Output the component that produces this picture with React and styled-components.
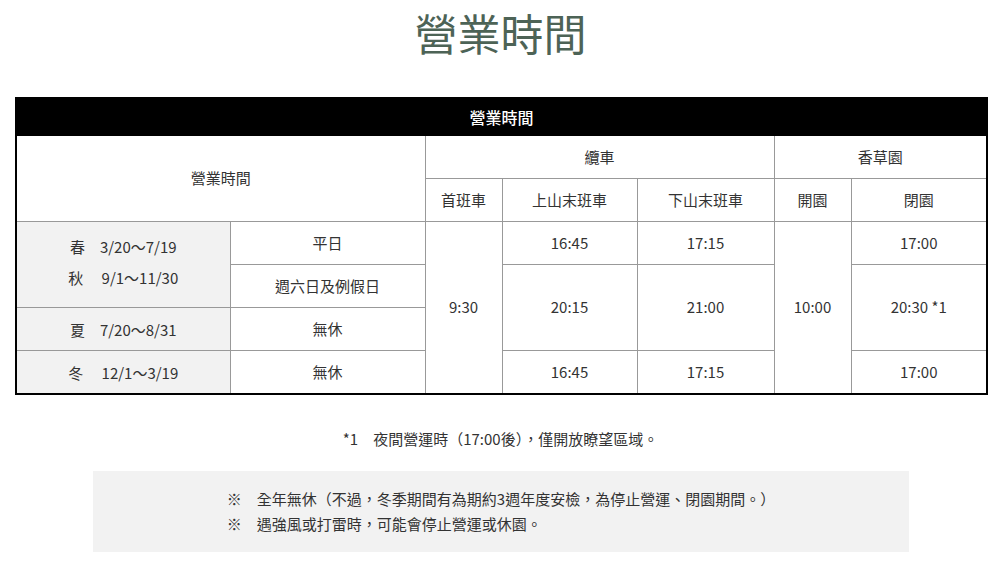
import React from "react";
import styled, { createGlobalStyle } from "styled-components";

const GlobalStyle = createGlobalStyle`
  body {
    margin: 0;
    background: #fff;
    font-family: "Noto Sans CJK TC", "Noto Sans", sans-serif;
    color: #333;
  }
`;

const Page = styled.div`
  width: 1000px;
  padding: 2px 14px 0 15px;
  box-sizing: border-box;
`;

const Title = styled.h1`
  margin: 0;
  font-size: 43px;
  line-height: 60px;
  font-weight: 400;
  text-align: center;
  color: #4d6356;
`;

const Table = styled.table`
  margin-top: 35px;
  width: 971px;
  border-collapse: collapse;
  border: 2px solid #000;
  table-layout: fixed;
  font-size: 15px;
`;

const Caption = styled.th`
  background: #000;
  color: #fff;
  font-size: 16px;
  font-weight: 500;
  height: 35px;
  padding: 0;
  border: 2px solid #000;
`;

const Cell = styled.td`
  border: 1px solid #999;
  height: ${(p) => (p.$tall ? 85 : 42)}px;
  padding: 0 0 ${(p) => (p.$lift ? 6 : 0)}px;
  text-align: center;
  vertical-align: middle;
  font-weight: 400;
  color: #333;
  line-height: 1.5;
  background: ${(p) => (p.$shade ? "#f2f2f2" : "#fff")};
`;

const HeadCell = styled(Cell).attrs({ as: "th" })``;

const Season = styled.div`
  white-space: pre;
  line-height: 31px;
`;

const Note = styled.p`
  margin: 32px 0 0;
  font-size: 15px;
  line-height: 24px;
  text-align: center;
  white-space: pre;
`;

const NoticeBox = styled.div`
  width: 816px;
  margin: 20px 0 0 78px;
  padding: 15px 0 16px;
  background: #f2f2f2;
  text-align: center;
`;

const NoticeList = styled.ul`
  display: inline-block;
  margin: 0;
  padding: 0;
  list-style: none;
  text-align: left;
  font-size: 15px;
  line-height: 25px;
`;

const NoticeItem = styled.li`
  white-space: pre;
`;

export default function App() {
  return (
    <Page>
      <GlobalStyle />
      <Title>營業時間</Title>
      <Table>
        <colgroup>
          <col style={{ width: 214 }} />
          <col style={{ width: 195 }} />
          <col style={{ width: 77 }} />
          <col style={{ width: 135 }} />
          <col style={{ width: 137 }} />
          <col style={{ width: 77 }} />
          <col style={{ width: 136 }} />
        </colgroup>
        <thead>
          <tr>
            <Caption colSpan={7}>營業時間</Caption>
          </tr>
          <tr>
            <HeadCell colSpan={2} rowSpan={2}>營業時間</HeadCell>
            <HeadCell colSpan={3}>纜車</HeadCell>
            <HeadCell colSpan={2}>香草園</HeadCell>
          </tr>
          <tr>
            <HeadCell>首班車</HeadCell>
            <HeadCell>上山末班車</HeadCell>
            <HeadCell>下山末班車</HeadCell>
            <HeadCell>開園</HeadCell>
            <HeadCell>閉園</HeadCell>
          </tr>
        </thead>
        <tbody>
          <tr>
            <Cell $shade $lift rowSpan={2}>
              <Season>{"春　3/20～7/19"}</Season>
              <Season>{"秋　 9/1～11/30"}</Season>
            </Cell>
            <Cell>平日</Cell>
            <Cell rowSpan={4}>9:30</Cell>
            <Cell>16:45</Cell>
            <Cell>17:15</Cell>
            <Cell rowSpan={4}>10:00</Cell>
            <Cell>17:00</Cell>
          </tr>
          <tr>
            <Cell>週六日及例假日</Cell>
            <Cell rowSpan={2}>20:15</Cell>
            <Cell rowSpan={2}>21:00</Cell>
            <Cell rowSpan={2}>20:30 *1</Cell>
          </tr>
          <tr>
            <Cell $shade>
              <Season>{"夏　7/20～8/31"}</Season>
            </Cell>
            <Cell>無休</Cell>
          </tr>
          <tr>
            <Cell $shade>
              <Season>{"冬　 12/1～3/19"}</Season>
            </Cell>
            <Cell>無休</Cell>
            <Cell>16:45</Cell>
            <Cell>17:15</Cell>
            <Cell>17:00</Cell>
          </tr>
        </tbody>
      </Table>
      <Note>{"*1　夜間營運時（17:00後），僅開放瞭望區域。"}</Note>
      <NoticeBox>
        <NoticeList>
          <NoticeItem>{"※　全年無休（不過，冬季期間有為期約3週年度安檢，為停止營運、閉園期間。）"}</NoticeItem>
          <NoticeItem>{"※　遇強風或打雷時，可能會停止營運或休園。"}</NoticeItem>
        </NoticeList>
      </NoticeBox>
    </Page>
  );
}
